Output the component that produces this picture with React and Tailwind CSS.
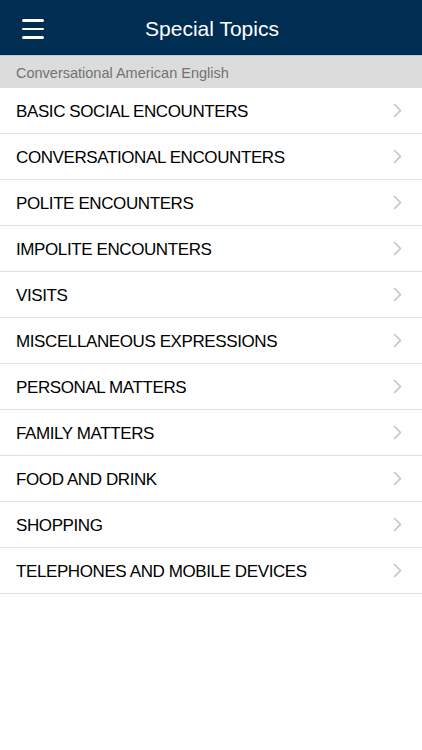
import { useState } from "react";

const topics = [
  "BASIC SOCIAL ENCOUNTERS",
  "CONVERSATIONAL ENCOUNTERS",
  "POLITE ENCOUNTERS",
  "IMPOLITE ENCOUNTERS",
  "VISITS",
  "MISCELLANEOUS EXPRESSIONS",
  "PERSONAL MATTERS",
  "FAMILY MATTERS",
  "FOOD AND DRINK",
  "SHOPPING",
  "TELEPHONES AND MOBILE DEVICES",
];

const Chevron = () => (
  <svg width="9" height="15" viewBox="0 0 9 15" fill="none">
    <path d="M1.5 1.5L7.5 7.5L1.5 13.5" stroke="#c4c4c8" strokeWidth="1.6" strokeLinecap="round" strokeLinejoin="round" />
  </svg>
);

const App = () => {
  const [selected, setSelected] = useState(null);

  return (
    <div className="min-h-screen bg-white" style={{ fontFamily: "'Liberation Sans', Arial, sans-serif" }}>
      {/* Top bar */}
      <div className="relative h-[55px] bg-[#002d52] flex items-center justify-center">
        <button className="absolute left-[22px] top-[19px] flex flex-col gap-[6px]">
          <span className="block w-[22px] h-[2.5px] bg-white rounded-sm"></span>
          <span className="block w-[22px] h-[2.5px] bg-white rounded-sm"></span>
          <span className="block w-[22px] h-[2.5px] bg-white rounded-sm"></span>
        </button>
        <h1 className="text-white text-[21px] font-normal pt-[2px] pl-[2px]">Special Topics</h1>
      </div>

      {/* Section header */}
      <div className="h-[33px] bg-[#dcdcdc] flex items-center px-4 pt-[3px] border-t border-[#c8c8c8]">
        <span className="text-[14.5px] text-[#727272]">Conversational American English</span>
      </div>

      {/* Topic list */}
      <ul>
        {topics.map((t) => (
          <li
            key={t}
            onClick={() => setSelected(t)}
            className={`h-[46px] flex items-center justify-between pl-4 pr-[20px] border-b border-[#e0e0e0] ${
              selected === t ? "bg-gray-100" : "bg-white"
            }`}
          >
            <span className="text-[17px] text-black tracking-[-0.4px] pt-[2px]">{t}</span>
            <Chevron />
          </li>
        ))}
      </ul>
    </div>
  );
};

export default App;
